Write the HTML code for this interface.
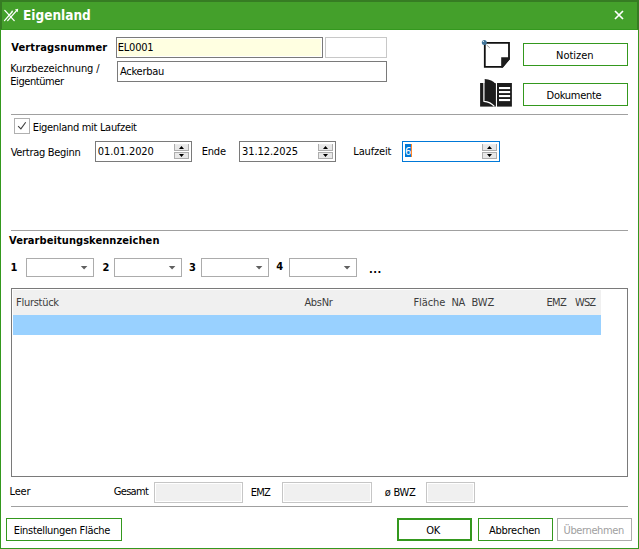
<!DOCTYPE html>
<html lang="de">
<head>
<meta charset="utf-8">
<title>Eigenland</title>
<style>
*{box-sizing:border-box;margin:0;padding:0}
html,body{width:639px;height:549px;overflow:hidden;background:#fff}
body{position:relative;font-family:"DejaVu Sans Condensed","Liberation Sans",sans-serif;font-size:11px;color:#000;line-height:13px}
.abs,.t,.b,.inp,.btn,.ln{position:absolute}
.t,.b{white-space:nowrap}
.b{font-weight:bold}
.h{color:#3c3c3c}
#win{position:absolute;left:0;top:0;width:639px;height:549px;border:1px solid #34981e;border-top:none}
#title{position:absolute;left:0;top:0;width:639px;height:30px;background:#44a02b;border-top:2px solid #367c23;border-left:2px solid #367c23;border-right:2px solid #367c23;border-bottom:1px solid #34981e}
.cap{position:absolute;font-size:14px;line-height:17px;font-weight:bold;color:#fff;white-space:nowrap}
.inp{border:1px solid #7a7a7a;background:#fff}
.ln{height:1px;background:#a0a0a0}
.btn{border:1px solid #34981e;background:#fff}
.ro{border:1px solid #c6c6c6;background:#f0f0f0;box-shadow:inset 0 0 0 1px #fff}
</style>
</head>
<body>
<div id="win"></div>
<div id="title"></div>
<svg class="abs" style="left:0;top:0" width="24" height="30" viewBox="0 0 24 30"><g stroke="#fff" stroke-width="1.3" fill="none" stroke-linecap="round"><path d="M4.8 10.4 L14.2 20.6"/><path d="M4.5 20.6 L12 12"/><path d="M7.7 20.6 L16.8 10.4"/></g><path d="M14.9 9.6 L18.2 8.8 L17.7 12.2 Z" fill="#fff"/><path d="M10.8 11 L13.2 10.4 L12.8 12.6 Z" fill="#fff" opacity="0.85"/></svg>
<div class="cap" style="left:23px;top:6px;font-size:14.7px;line-height:18px;transform:scaleX(0.92);transform-origin:0 0">Eigenland</div>
<svg class="abs" style="left:614px;top:10px" width="10" height="10" viewBox="0 0 10 10"><path d="M1 1 L9 9 M9 1 L1 9" stroke="#fff" stroke-width="1.7" fill="none"/></svg>
<div class="b" style="left:11.2px;top:41px;letter-spacing:0.14px;">Vertragsnummer</div>
<div class="inp" style="left:116px;top:37px;width:207px;height:21px;background:#ffffe1;box-shadow:inset 0 0 0 1px #fff"></div>
<div class="t" style="left:117.8px;top:41px;letter-spacing:-0.22px;">EL0001</div>
<div class="inp" style="left:325px;top:37px;width:62px;height:21px;border-color:#c8c8c8"></div>
<div class="t" style="left:10.3px;top:62px;letter-spacing:-0.12px;">Kurzbezeichnung /</div>
<div class="t" style="left:10.3px;top:75px;letter-spacing:-0.43px;">Eigentümer</div>
<div class="inp" style="left:117px;top:61px;width:270px;height:21px"></div>
<div class="t" style="left:120px;top:65px;letter-spacing:-0.26px;">Ackerbau</div>
<svg class="abs" style="left:478px;top:36px" width="36" height="36" viewBox="478 36 36 36">
<path d="M484.8 42.8 H509 V59 L502.4 66.9 H484.8 Z" fill="#fff" stroke="#111" stroke-width="1.8" stroke-linejoin="miter"/>
<path d="M501.2 57.3 H509.6 V59.2 L502.6 67.4 H501.2 Z" fill="#1c1c1c"/>
<path d="M486.6 45 L489.8 47.8" stroke="#777" stroke-width="0.7"/>
<circle cx="484.3" cy="42.4" r="2.5" fill="#41759a"/>
<circle cx="483.4" cy="41.4" r="0.7" fill="#cfe0ea"/>
</svg>
<svg class="abs" style="left:478px;top:76px" width="36" height="34" viewBox="478 76 36 34">
<rect x="480.1" y="83" width="15.6" height="23.6" fill="#1c1c1c"/>
<path d="M484.5 79 C489.5 79.2 493.6 81 495.7 84.2 V106.4 C492.6 103.2 489.3 101.3 484.5 100.8 Z" fill="#1c1c1c"/>
<path d="M483.9 79.2 V101.3 C488.6 101.7 491.8 103.4 494.4 106.4" fill="none" stroke="#fff" stroke-width="1.2"/>
<rect x="497" y="83" width="14.9" height="23.6" fill="#1c1c1c"/>
<g fill="#fff"><rect x="499" y="87" width="11.1" height="2.1"/><rect x="499" y="91" width="11.1" height="2.1"/><rect x="499" y="95" width="11.1" height="2.1"/><rect x="499" y="99" width="11.1" height="2.1"/></g>
</svg>
<div class="btn" style="left:523px;top:43px;width:105px;height:23px"></div>
<div class="t" style="left:556px;top:49px;">Notizen</div>
<div class="btn" style="left:523px;top:83px;width:105px;height:23px"></div>
<div class="t" style="left:546.6px;top:89px;letter-spacing:-0.28px;">Dokumente</div>
<div class="ln" style="left:11px;top:114px;width:617px"></div>
<div class="abs" style="left:14px;top:118px;width:16px;height:16px;border:1px solid #b0b0b0;background:#fff"></div><svg class="abs" style="left:14px;top:118px" width="16" height="16" viewBox="14 118 16 16"><path d="M18.1 126.1 L20.9 128.9 L25.7 122.2" stroke="#404040" stroke-width="1.1" fill="none"/></svg>
<div class="t" style="left:32.7px;top:121px;letter-spacing:-0.31px;">Eigenland mit Laufzeit</div>
<div class="t" style="left:10.7px;top:146px;letter-spacing:-0.3px;">Vertrag Beginn</div>
<div class="inp" style="left:95px;top:141px;width:97px;height:21px"></div>
<div class="t" style="left:97.8px;top:145px;letter-spacing:-0.06px;">01.01.2020</div>
<svg class="abs" style="left:174px;top:144px" width="15" height="15" viewBox="0 0 15 15"><rect x="0.5" y="0.5" width="14" height="6" fill="#e8e8e8" stroke="#adadad"/><rect x="1" y="0" width="13" height="1" fill="#ececec"/><rect x="0.5" y="8.5" width="14" height="6" fill="#e8e8e8" stroke="#adadad"/><path d="M5 5 L10 5 L7.5 2 Z M5 10 L10 10 L7.5 13 Z" fill="#000"/></svg>
<div class="t" style="left:201.8px;top:145px;letter-spacing:-0.23px;">Ende</div>
<div class="inp" style="left:239px;top:141px;width:97px;height:21px"></div>
<div class="t" style="left:241.9px;top:145px;letter-spacing:-0.05px;">31.12.2025</div>
<svg class="abs" style="left:318px;top:144px" width="15" height="15" viewBox="0 0 15 15"><rect x="0.5" y="0.5" width="14" height="6" fill="#e8e8e8" stroke="#adadad"/><rect x="1" y="0" width="13" height="1" fill="#ececec"/><rect x="0.5" y="8.5" width="14" height="6" fill="#e8e8e8" stroke="#adadad"/><path d="M5 5 L10 5 L7.5 2 Z M5 10 L10 10 L7.5 13 Z" fill="#000"/></svg>
<div class="t" style="left:353.3px;top:145px;letter-spacing:-0.15px;">Laufzeit</div>
<div class="inp" style="left:402px;top:141px;width:98px;height:21px;border-color:#0078d7"></div>
<div class="abs" style="left:405px;top:144px;width:6px;height:13px;background:#0078d7"></div><div class="abs" style="left:411px;top:144px;width:1px;height:13px;background:#ff8728"></div>
<div class="t" style="left:405px;top:145px;color:#fff;letter-spacing:0">6</div>
<svg class="abs" style="left:482px;top:144px" width="15" height="15" viewBox="0 0 15 15"><rect x="0.5" y="0.5" width="14" height="6" fill="#e8e8e8" stroke="#adadad"/><rect x="1" y="0" width="13" height="1" fill="#ececec"/><rect x="0.5" y="8.5" width="14" height="6" fill="#e8e8e8" stroke="#adadad"/><path d="M5 5 L10 5 L7.5 2 Z M5 10 L10 10 L7.5 13 Z" fill="#000"/></svg>
<div class="ln" style="left:11px;top:230px;width:617px"></div>
<div class="b" style="left:9px;top:234px;letter-spacing:0.07px;">Verarbeitungskennzeichen</div>
<div class="b" style="left:10.6px;top:261px;">1</div>
<div class="inp" style="left:26px;top:258px;width:68px;height:19px;border-color:#acacac"></div><svg class="abs" style="left:80px;top:265px" width="9" height="5" viewBox="0 0 9 5"><path d="M0.8 1 H7.4 L4.1 4.4 Z" fill="#606060"/></svg>
<div class="b" style="left:102.5px;top:261px;">2</div>
<div class="inp" style="left:114px;top:258px;width:68px;height:19px;border-color:#acacac"></div><svg class="abs" style="left:168px;top:265px" width="9" height="5" viewBox="0 0 9 5"><path d="M0.8 1 H7.4 L4.1 4.4 Z" fill="#606060"/></svg>
<div class="b" style="left:189px;top:261px;">3</div>
<div class="inp" style="left:201px;top:258px;width:68px;height:19px;border-color:#acacac"></div><svg class="abs" style="left:255px;top:265px" width="9" height="5" viewBox="0 0 9 5"><path d="M0.8 1 H7.4 L4.1 4.4 Z" fill="#606060"/></svg>
<div class="b" style="left:276.2px;top:260px;">4</div>
<div class="inp" style="left:289px;top:258px;width:68px;height:19px;border-color:#acacac"></div><svg class="abs" style="left:343px;top:265px" width="9" height="5" viewBox="0 0 9 5"><path d="M0.8 1 H7.4 L4.1 4.4 Z" fill="#606060"/></svg>
<div class="b" style="left:369px;top:263px;letter-spacing:0.5px">...</div>
<div class="inp" style="left:11px;top:288px;width:617px;height:189px"></div>
<div class="abs" style="left:13px;top:290px;width:588px;height:25px;background:#f0f0f0"></div>
<div class="abs" style="left:13px;top:315px;width:588px;height:20px;background:#99d1ff"></div>
<div class="t h" style="left:16px;top:296px;letter-spacing:-0.28px;">Flurstück</div>
<div class="t h" style="left:304.4px;top:296px;letter-spacing:-0.32px;">AbsNr</div>
<div class="t h" style="left:413.4px;top:296px;letter-spacing:-0.06px;">Fläche</div>
<div class="t h" style="left:451.5px;top:296px;letter-spacing:-0.4px;">NA</div>
<div class="t h" style="left:471.5px;top:296px;letter-spacing:-0.15px;">BWZ</div>
<div class="t h" style="left:546.5px;top:296px;letter-spacing:-0.7px;">EMZ</div>
<div class="t h" style="left:575.1px;top:296px;letter-spacing:-0.95px;">WSZ</div>
<div class="t" style="left:9.5px;top:485px;letter-spacing:-0.17px;">Leer</div>
<div class="t" style="left:113.8px;top:485px;letter-spacing:-0.7px;">Gesamt</div>
<div class="abs ro" style="left:154px;top:482px;width:89px;height:21px"></div>
<div class="t" style="left:250.8px;top:486px;letter-spacing:-0.75px;">EMZ</div>
<div class="abs ro" style="left:282px;top:482px;width:90px;height:21px"></div>
<div class="t" style="left:384.8px;top:486px;letter-spacing:-0.3px;">ø BWZ</div>
<div class="abs ro" style="left:426px;top:482px;width:49px;height:21px"></div>
<div class="ln" style="left:11px;top:506px;width:617px"></div>
<div class="btn" style="left:6px;top:518px;width:116px;height:23px"></div>
<div class="t" style="left:13.7px;top:524px;letter-spacing:-0.31px;">Einstellungen Fläche</div>
<div class="btn" style="left:397px;top:518px;width:75px;height:23px;border-width:2px"></div>
<div class="t" style="left:426.3px;top:524px;letter-spacing:-0.4px;">OK</div>
<div class="btn" style="left:478px;top:518px;width:75px;height:23px"></div>
<div class="t" style="left:488.9px;top:524px;letter-spacing:-0.24px;">Abbrechen</div>
<div class="btn" style="left:557px;top:518px;width:75px;height:23px;border-color:#adadad"></div>
<div class="t" style="left:563.6px;top:524px;letter-spacing:-0.39px;color:#a0a0a0">Übernehmen</div>
</body>
</html>
